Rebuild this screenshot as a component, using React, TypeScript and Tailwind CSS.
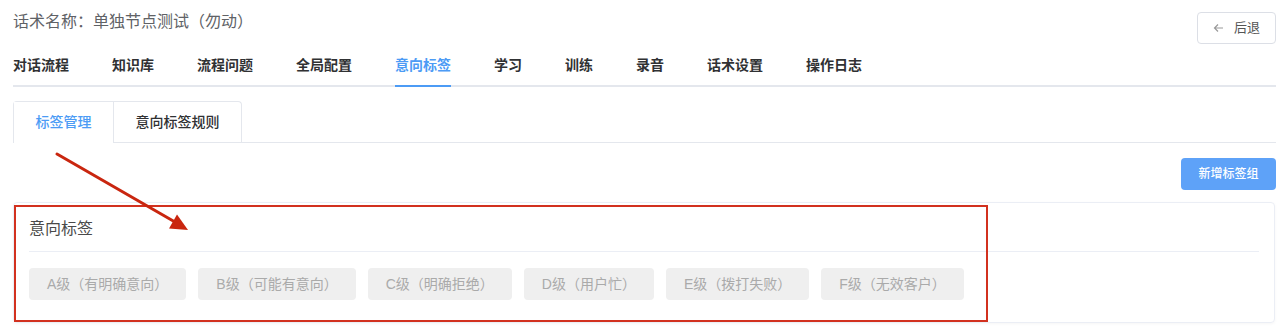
import React from "react";

const font = { fontFamily: '"Liberation Sans", "Noto Sans CJK SC", sans-serif' };

const navItems = ["对话流程", "知识库", "流程问题", "全局配置", "意向标签", "学习", "训练", "录音", "话术设置", "操作日志"];
const tags = ["A级（有明确意向）", "B级（可能有意向）", "C级（明确拒绝）", "D级（用户忙）", "E级（拨打失败）", "F级（无效客户）"];

export default function App() {
  return (
    <div className="relative w-[1280px] h-[336px] overflow-hidden bg-white pl-[13px] pr-[4px] pt-[8px]" style={font}>
      {/* header */}
      <div className="flex items-start justify-between">
        <div className="mt-[2px] text-[16px] leading-[24px] text-[#606266]">话术名称：单独节点测试（勿动）</div>
        <button className="mt-[4px] h-[32px] w-[79px] flex items-center justify-center gap-[10px] rounded-[4px] border border-[#dcdfe6] bg-white text-[13px] text-[#555]">
          <svg width="11" height="10" viewBox="0 0 11 10" fill="none" stroke="#999" strokeWidth="1.2">
            <path d="M10 5H1.5M5 1.5L1.5 5L5 8.5" />
          </svg>
          <span>后退</span>
        </button>
      </div>

      {/* nav */}
      <div className="mt-[1px] flex h-[42px] border-b-2 border-[#e4e7ed]">
        {navItems.map((n, i) => (
          <div
            key={n}
            className={`relative mr-[43px] h-[40px] leading-[40px] text-[14px] font-semibold ${i === 4 ? "text-[#4c9bf5]" : "text-[#303133]"}`}
          >
            {n}
            {i === 4 && <div className="absolute left-0 right-0 -bottom-[2px] h-[2px] bg-[#4c9bf5]" />}
          </div>
        ))}
      </div>

      {/* sub tabs */}
      <div className="mt-[14px] flex h-[42px] border-b border-[#e4e7ed]">
        <div className="flex w-[229px] rounded-t-[4px] border border-b-0 border-[#e4e7ed]">
          <div className="-mb-[1px] flex w-[100px] items-center justify-center border-r border-[#e4e7ed] bg-white text-[14px] font-medium text-[#4c9bf5]">
            标签管理
          </div>
          <div className="flex flex-1 items-center justify-center text-[14px] font-medium text-[#303133]">
            意向标签规则
          </div>
        </div>
      </div>

      {/* action */}
      <div className="mt-[15px] flex justify-end">
        <button className="h-[32px] w-[95px] rounded-[4px] bg-[#5ea2f8] text-[12px] font-medium text-white">新增标签组</button>
      </div>

      {/* card */}
      <div className="mt-[12px] mr-[1px] rounded-[4px] border border-[#ebeef5] shadow-[0_1px_3px_rgba(0,0,0,0.04)]">
        <div className="mx-[15px] border-b border-[#ebeef5] pt-[15px] pb-[11px] text-[16px] leading-[22px] text-[#4a4a4a]">意向标签</div>
        <div className="flex gap-[12px] px-[15px] pt-[16px] pb-[22px]">
          {tags.map((t) => (
            <div key={t} className="flex h-[32px] items-center rounded-[4px] bg-[#efefef] px-[18px] text-[14px] text-[#aaaaaa]">
              {t}
            </div>
          ))}
        </div>
      </div>

      {/* annotations */}
      <div className="pointer-events-none absolute left-[14px] top-[205px] h-[117px] w-[974px] border-2 border-[#d2311f]" />
      <svg className="pointer-events-none absolute left-0 top-0" width="1280" height="336">
        <line x1="57" y1="154" x2="175" y2="222" stroke="#c9260f" strokeWidth="3" strokeLinecap="round" />
        <polygon points="188,230 169,228.5 177,214.5" fill="#c9260f" />
      </svg>
    </div>
  );
}
